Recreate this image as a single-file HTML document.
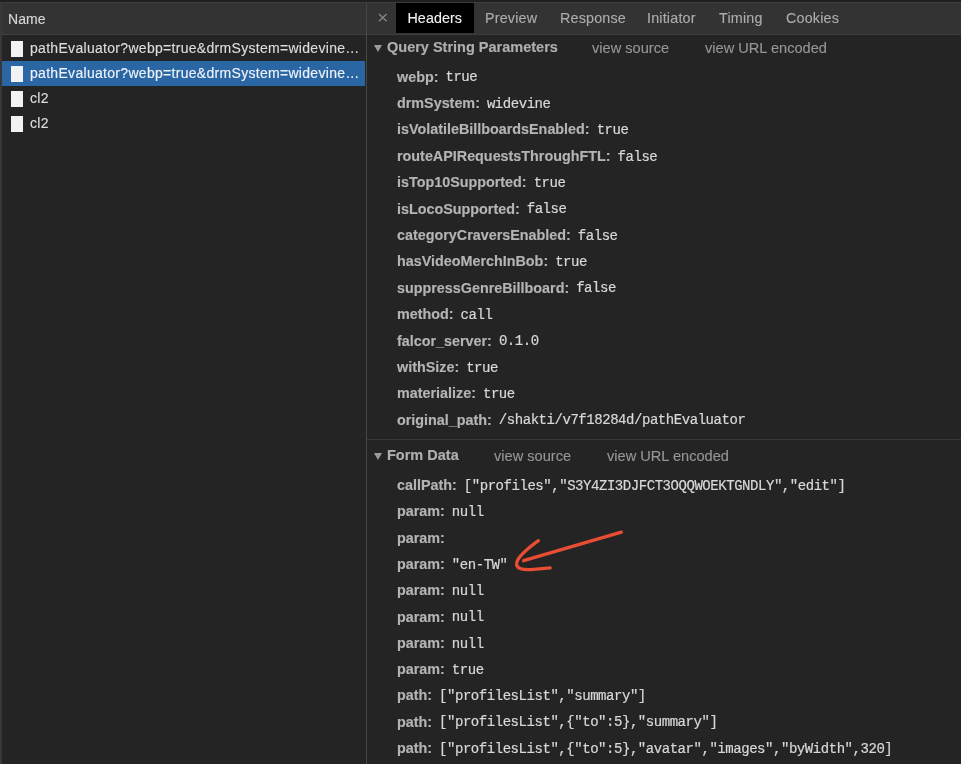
<!DOCTYPE html>
<html><head><meta charset="utf-8">
<style>
*{margin:0;padding:0;box-sizing:border-box}
html,body{width:961px;height:764px;overflow:hidden;background:#242424}
body{position:relative;font-family:"Liberation Sans",sans-serif;font-size:14px;color:#c8c8c8}
.abs{position:absolute;white-space:nowrap}
#topstrip{left:0;top:0;width:961px;height:2px;background:#1f1f1f}
#topline{left:0;top:2px;width:961px;height:1px;background:#3d3d3d}
#lefthdr{left:0;top:3px;width:366px;height:31px;background:#333333}
#lefthdrb{left:0;top:34px;width:366px;height:1px;background:#3e3e3e}
#leftedge{left:0;top:3px;width:2px;height:761px;background:#383838}
#divider{left:366px;top:3px;width:1px;height:761px;background:#474747}
#righthdr{left:367px;top:3px;width:594px;height:31px;background:#333333}
#righthdrb{left:367px;top:34px;width:594px;height:1px;background:#3e3e3e}
.name{left:8px;top:10.5px;font-size:14px;letter-spacing:0.1px;color:#d6d6d6;-webkit-text-stroke:0.15px currentColor}
.row{left:2px;width:363px;height:25px}
.row.sel{background:#2b66a4}
.ficon{position:absolute;left:9px;top:5px;width:12px;height:16px;background:#f2f2f2}
.rtxt{position:absolute;left:28px;top:4px;font-size:14px;letter-spacing:0.3px;color:#dcdcdc;-webkit-text-stroke:0.15px currentColor;width:332px;overflow:hidden;text-overflow:ellipsis;white-space:nowrap}
.sel .rtxt{color:#eef3fa}
.tab{top:2.75px;height:30px;line-height:30px;font-size:14.3px;letter-spacing:0.2px;color:#adadad;-webkit-text-stroke:0.12px currentColor}
#tabsel{left:396px;top:3px;width:78px;height:30px;background:#000}
.sect{left:0;font-weight:bold;font-size:14.5px;color:#afafaf;-webkit-text-stroke:0.15px #afafaf}
.tri{position:absolute;width:0;height:0;border-left:4.5px solid transparent;border-right:4.5px solid transparent;border-top:7px solid #9b9b9b}
.vs{position:absolute;font-weight:normal;font-size:14.6px;color:#969696;-webkit-text-stroke:0.12px currentColor;margin-top:0.8px}
.kv{left:397px;font-size:14px}
.k{font-weight:bold;font-size:14.35px;color:#b4b4b4;-webkit-text-stroke:0.15px #b4b4b4}
.v{font-family:"Liberation Mono",monospace;font-size:14px;letter-spacing:-0.45px;color:#d8d8d8;margin-left:7px;position:relative;top:-0.3px;-webkit-text-stroke:0.2px #d8d8d8}
#secdiv{left:367px;top:439px;width:594px;height:1px;background:#383838}
#wrap{position:absolute;left:0;top:0;width:961px;height:764px;filter:blur(0.4px)}
</style></head><body><div id="wrap">
<div class="abs" id="topstrip"></div>
<div class="abs" id="topline"></div>
<div class="abs" id="lefthdr"></div>
<div class="abs" id="lefthdrb"></div>
<div class="abs" id="righthdr"></div>
<div class="abs" id="righthdrb"></div>
<div class="abs" id="leftedge"></div>
<div class="abs" id="divider"></div>

<div class="abs name" id="nm">Name</div>
<div class="abs row" style="top:36px"><div class="ficon"></div><div class="rtxt" id="r1">pathEvaluator?webp=true&amp;drmSystem=widevine…</div></div>
<div class="abs row sel" style="top:61px"><div class="ficon"></div><div class="rtxt">pathEvaluator?webp=true&amp;drmSystem=widevine…</div></div>
<div class="abs row" style="top:86px"><div class="ficon"></div><div class="rtxt">cl2</div></div>
<div class="abs row" style="top:111px"><div class="ficon"></div><div class="rtxt">cl2</div></div>

<div class="abs" id="tabsel"></div>
<svg class="abs" style="left:378px;top:13px" width="10" height="9" viewBox="0 0 10 9"><path d="M1 1L8.6 8.2M8.6 1L1 8.2" stroke="#838383" stroke-width="1.45"/></svg>
<div class="abs tab" id="t1" style="left:407.5px;color:#f2f2f2;letter-spacing:0.05px">Headers</div>
<div class="abs tab" id="t2" style="left:485px">Preview</div>
<div class="abs tab" id="t3" style="left:560px">Response</div>
<div class="abs tab" id="t4" style="left:647px">Initiator</div>
<div class="abs tab" id="t5" style="left:719px">Timing</div>
<div class="abs tab" id="t6" style="left:786px">Cookies</div>

<div class="abs sect" style="top:39px;left:374px;width:587px;height:16px">
  <div class="tri" style="left:0;top:6px"></div>
  <span class="abs" id="qs" style="left:13px;top:0">Query String Parameters</span>
  <span class="vs" style="left:218px;top:0">view source</span>
  <span class="vs" style="left:331px;top:0">view URL encoded</span>
</div>

<div class="abs kv" style="top:68.70px"><span class="k">webp:</span><span class="v">true</span></div>
<div class="abs kv" style="top:95.08px"><span class="k">drmSystem:</span><span class="v">widevine</span></div>
<div class="abs kv" style="top:121.46px"><span class="k">isVolatileBillboardsEnabled:</span><span class="v">true</span></div>
<div class="abs kv" style="top:147.84px"><span class="k">routeAPIRequestsThroughFTL:</span><span class="v">false</span></div>
<div class="abs kv" style="top:174.22px"><span class="k">isTop10Supported:</span><span class="v">true</span></div>
<div class="abs kv" style="top:200.60px"><span class="k">isLocoSupported:</span><span class="v">false</span></div>
<div class="abs kv" style="top:226.98px"><span class="k">categoryCraversEnabled:</span><span class="v">false</span></div>
<div class="abs kv" style="top:253.36px"><span class="k">hasVideoMerchInBob:</span><span class="v">true</span></div>
<div class="abs kv" style="top:279.74px"><span class="k">suppressGenreBillboard:</span><span class="v">false</span></div>
<div class="abs kv" style="top:306.12px"><span class="k">method:</span><span class="v">call</span></div>
<div class="abs kv" style="top:332.50px"><span class="k">falcor_server:</span><span class="v">0.1.0</span></div>
<div class="abs kv" style="top:358.88px"><span class="k">withSize:</span><span class="v">true</span></div>
<div class="abs kv" style="top:385.26px"><span class="k">materialize:</span><span class="v">true</span></div>
<div class="abs kv" id="op" style="top:411.64px"><span class="k">original_path:</span><span class="v">/shakti/v7f18284d/pathEvaluator</span></div>

<div class="abs" id="secdiv"></div>

<div class="abs sect" style="top:447px;left:374px;width:587px;height:16px">
  <div class="tri" style="left:0;top:6px"></div>
  <span class="abs" id="fd" style="left:13px;top:0">Form Data</span>
  <span class="vs" style="left:120px;top:0">view source</span>
  <span class="vs" style="left:233px;top:0">view URL encoded</span>
</div>

<div class="abs kv" style="top:477.00px"><span class="k">callPath:</span><span class="v">["profiles","S3Y4ZI3DJFCT3OQQWOEKTGNDLY","edit"]</span></div>
<div class="abs kv" style="top:503.30px"><span class="k">param:</span><span class="v">null</span></div>
<div class="abs kv" style="top:529.60px"><span class="k">param:</span><span class="v"></span></div>
<div class="abs kv" style="top:555.90px"><span class="k">param:</span><span class="v">"en-TW"</span></div>
<div class="abs kv" style="top:582.20px"><span class="k">param:</span><span class="v">null</span></div>
<div class="abs kv" style="top:608.50px"><span class="k">param:</span><span class="v">null</span></div>
<div class="abs kv" style="top:634.80px"><span class="k">param:</span><span class="v">null</span></div>
<div class="abs kv" style="top:661.10px"><span class="k">param:</span><span class="v">true</span></div>
<div class="abs kv" style="top:687.40px"><span class="k">path:</span><span class="v">["profilesList","summary"]</span></div>
<div class="abs kv" style="top:713.70px"><span class="k">path:</span><span class="v">["profilesList",{"to":5},"summary"]</span></div>
<div class="abs kv" style="top:740.00px"><span class="k">path:</span><span class="v">["profilesList",{"to":5},"avatar","images","byWidth",320]</span></div>

<svg class="abs" style="left:0;top:0" width="961" height="764">
  <path d="M621.4 532.2 L523.6 560.7" stroke="#e94d33" stroke-width="3.3" stroke-linecap="round" fill="none"/>
  <path d="M538.4 540.7 C529 547.5 518.5 555.5 516.8 562.5 C515.5 568.5 522 570 531 569.6 L550.2 567.9" stroke="#e94d33" stroke-width="3.3" stroke-linecap="round" stroke-linejoin="round" fill="none"/>
</svg>
</div></body></html>
